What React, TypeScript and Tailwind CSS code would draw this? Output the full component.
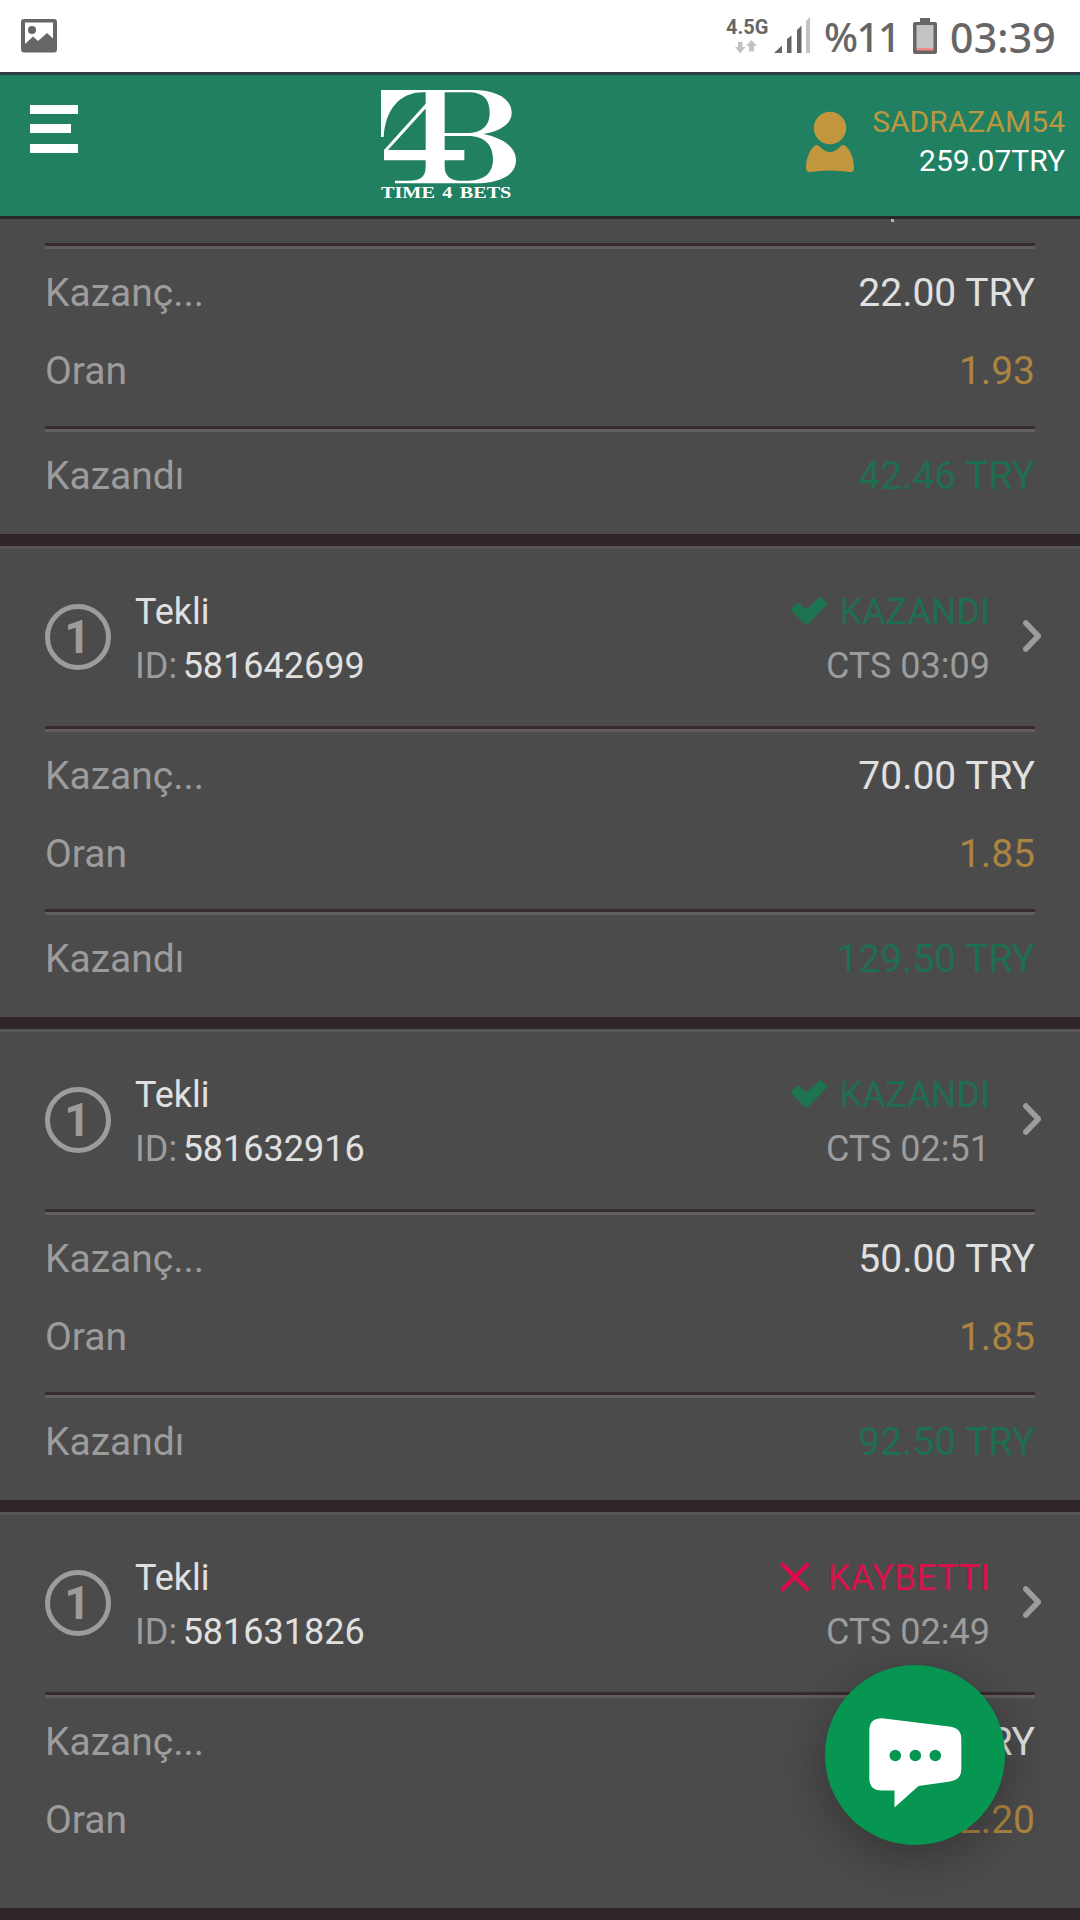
import { clsx } from "clsx";

type Bet = {
  id?: string;
  time?: string;
  status: "won" | "lost";
  stake: string;
  odds: string;
  payout?: string;
};

const bets: Bet[] = [
  { status: "won", stake: "22.00 TRY", odds: "1.93", payout: "42.46 TRY" },
  { id: "581642699", time: "03:09", status: "won", stake: "70.00 TRY", odds: "1.85", payout: "129.50 TRY" },
  { id: "581632916", time: "02:51", status: "won", stake: "50.00 TRY", odds: "1.85", payout: "92.50 TRY" },
  { id: "581631826", time: "02:49", status: "lost", stake: "50.00 TRY", odds: "2.20" },
];

function StatusBar() {
  return (
    <div className="flex h-[72px] shrink-0 items-start justify-between bg-white text-[#666]">
      <svg className="mt-[19px] ml-[21px] h-[34px] w-9" viewBox="0 0 36 34">
        <path
          fill="#666"
          fillRule="evenodd"
          d="M3 0H33Q36 0 36 3V30Q36 33.5 33 33.5H3Q0 33.5 0 30V3Q0 0 3 0ZM4 3.5V25L12 17.5L17 22L26 14L32 19.5V3.5Z"
        />
        <circle cx="11" cy="11" r="4" fill="#666" />
      </svg>
      <div className="flex h-[72px] items-start">
        <div className="w-[48px] pt-[16px]">
          <div className="h-[24px] text-[20px] leading-[23px] font-bold">
            4.5G
          </div>
          <svg className="ml-[9px] h-[14px] w-[22px]" viewBox="0 0 22 14">
            <path fill="#c3c3c3" d="M3 2H7.500V7H10.500L5.200 13.500L0 7H3ZM14 11.500H19V6H22L16.500 0L11 6H14Z" />
          </svg>
        </div>
        <svg className="mt-[17px] h-[36px] w-[36px]" viewBox="0 0 36 36">
          <path fill="#666" d="M0 36L8 28.500V36ZM13 22L17.500 18.500V36H13ZM23 13L27.500 8.500V36H23Z" />
          <path fill="#c3c3c3" d="M32 4L36 0V36H32Z" />
        </svg>
        <span className="mt-[9px] ml-[14px] w-[89px] font-['Noto_Sans',sans-serif] text-[40px] leading-[56px] font-medium tracking-[-1.500px] whitespace-nowrap">
          %11
        </span>
        <svg className="mt-[18px] h-[36px] w-[24px]" viewBox="0 0 24 36">
          <path fill="#666" d="M7 0H17V4H22Q24 4 24 6V34Q24 36 22 36H2Q0 36 0 34V6Q0 4 2 4H7Z" />
          <path fill="#c3c3c3" d="M3.500 7H20.500V30H3.500Z" />
          <path fill="#f08a8a" d="M3.500 30H20.500V32.500H3.500Z" />
        </svg>
        <span className="mt-[9px] ml-[13px] w-[130px] font-['Noto_Sans',sans-serif] text-[41px] leading-[56px] font-medium tracking-[0.2px] whitespace-nowrap">
          03:39
        </span>
      </div>
    </div>
  );
}

function Logo() {
  return (
    <svg className="h-[111px] w-[136px]" viewBox="63 90 408 333">
      <g fill="#fff">
        <path d="M63 90H200V97C118 92 76 150 71 231H63Z" />
        <path
          fillRule="evenodd"
          d="M197 90H340C412 90 455 118 455 158C455 190 426 212 370 222C430 234 468 262 468 300C468 345 422 370 345 370H105V362H145C182 362 197 350 197 320ZM254 97V219H320C368 219 389 195 389 158C389 120 372 97 325 97ZM254 228V320C254 345 270 362 300 362H325C375 362 399 338 399 298C399 256 375 228 325 228Z"
        />
        <path fillRule="evenodd" d="M72 270L199 129V143L84 270H313V301H72Z" />
        <text
          x="63"
          y="413"
          textLength="391"
          wordSpacing="6"
          lengthAdjust="spacingAndGlyphs"
          className="font-['Liberation_Serif',serif] text-[52px] font-bold"
        >
          TIME 4 BETS
        </text>
      </g>
    </svg>
  );
}

function Header() {
  return (
    <header className="flex h-[147px] shrink-0 items-start justify-between border-t-[3px] border-b-[3px] border-t-[#2f3d46] border-b-[#2a2627] bg-[#218061]">
      <button className="mt-[30px] ml-[30px] flex w-[351px] flex-col gap-[10.300px]">
        <span className="h-[9px] w-12 bg-white" />
        <span className="h-[9px] w-[40.500px] bg-white" />
        <span className="h-[9px] w-12 bg-white" />
      </button>
      <div className="mt-[15px]">
        <Logo />
      </div>
      <div className="flex grow items-start justify-end pr-[15px]">
        <svg className="mt-[36px] mr-[18px] h-[62px] w-[48px]" viewBox="0 0 48 62">
          <g fill="#c2963d">
            <circle cx="24" cy="17" r="16.200" />
            <path d="M10 34Q12 33.500 14 36Q24 46 34 36Q36 33.500 38 34C45 38 48 49 48 57Q48 61.500 44 61Q24 58 4 61Q0 61.500 0 57C0 49 3 38 10 34Z" />
          </g>
        </svg>
        <div className="pt-[27px] text-right text-[30px] leading-[39px]">
          <div className="text-[#b9983f]">SADRAZAM54</div>
          <div className="text-white">259.07TRY</div>
        </div>
      </div>
    </header>
  );
}

function Divider() {
  return <div className="mx-[45px] h-[6px] border-t-[3px] border-t-[#372b2c] bg-[#625e5f]" />;
}

function Row({ label, value, color }: { label: string; value: string; color: string }) {
  return (
    <div className="flex h-[78px] items-center justify-between px-[45px] text-[39px]">
      <span className="text-[#9c9c9c]">{label}</span>
      <span className={color}>{value}</span>
    </div>
  );
}

function BetHead({ id, time, status }: Bet) {
  const won = status === "won";
  return (
    <div className="flex h-[177px] items-start pl-[45px] text-[36px] leading-[54px]">
      <div className="mt-[55px] flex size-[66px] items-center justify-center rounded-full border-[5px] border-[#9c9c9c] pr-px text-[46px] font-bold text-[#9c9c9c]">
        1
      </div>
      <div className="mt-9 ml-6">
        <div className="text-[#e0e0e0]">Tekli</div>
        <div className="text-[#9c9c9c]">
          ID:<span className="ml-[5.500px] text-[#e0e0e0]">{id}</span>
        </div>
      </div>
      <div className="mt-9 ml-auto text-right">
        <div className={clsx("flex items-start justify-end", won ? "text-[#1f6e50]" : "text-[#d4144b]")}>
          {won ? (
            <svg className="mt-[12px] mr-[13px] h-[28px] w-9" viewBox="0 0 36 28">
              <path
                fill="#1c7550"
                d="M1 11L6 6.500Q7.500 5.500 9 7L15 12.500L28 .8Q29.500-.3 31 1L35.500 5.500Q36.500 7 35 8.500L17 27Q15.500 28.500 14 27L.8 14Q-.5 12.500 1 11Z"
              />
            </svg>
          ) : (
            <svg className="mt-[11px] mr-[18px] size-[30px]" viewBox="0 0 30 30">
              <path stroke="#e0094a" strokeWidth="4" d="M1.500 1.500L28.500 28.500M28.500 1.500L1.500 28.500" />
            </svg>
          )}
          {won ? "KAZANDI" : "KAYBETTI"}
        </div>
        <div className="text-[#9c9c9c]">CTS {time}</div>
      </div>
      <svg className="mt-[71px] mr-[39px] ml-[33px] h-[32px] w-[18px]" viewBox="0 0 18 32">
        <path
          d="M2.800 3L15.300 16L2.800 29"
          fill="none"
          stroke="#9c9c9c"
          strokeWidth="5.500"
          strokeLinecap="round"
          strokeLinejoin="round"
        />
      </svg>
    </div>
  );
}

function BetCard({ bet }: { bet: Bet }) {
  return (
    <div className="shrink-0 border-b-[12px] border-b-[#2f2528] bg-[#4b4b4b]">
      {bet.id ? (
        <div className="border-t-[3px] border-t-[#555]">
          <BetHead {...bet} />
        </div>
      ) : (
        // scrolled under the header, only the tail of its text shows
        <div className="h-[24px] pl-[891px]">
          <div className="size-[3px] bg-[#b4b4b4]" />
        </div>
      )}
      <Divider />
      <div className={clsx("pt-[5px]", bet.payout ? "pb-4" : "pb-[49px]")}>
        <Row label="Kazanç..." value={bet.stake} color="text-[#e0e0e0]" />
        <Row label="Oran" value={bet.odds} color="text-[#aa8440]" />
      </div>
      {bet.payout && (
        <>
          <Divider />
          <div className="pt-[5px] pb-[19px]">
            <Row label="Kazandı" value={bet.payout} color="text-[#1f6e50]" />
          </div>
        </>
      )}
    </div>
  );
}

function ChatButton() {
  return (
    <button className="absolute top-[1665px] left-[825px] flex size-[180px] items-start rounded-full bg-[#079552] shadow-[0_12px_48px_rgba(0,0,0,0.3)]">
      <svg className="mt-[53px] ml-[44px] h-[90px] w-[93px]" viewBox="0 0 93 90">
        <path
          fill="#fff"
          d="M13 .2L80 8.500Q92.300 9.500 92.300 21V51Q92.300 62 81 63.500L49.500 68L25.500 89.500V72.500H13Q.3 72.500 .3 60V12.500Q.3 .2 13 .2Z"
        />
        <g fill="#079552">
          <circle cx="26.300" cy="37.500" r="5.800" />
          <circle cx="46.300" cy="37.500" r="5.800" />
          <circle cx="66.300" cy="37.500" r="5.800" />
        </g>
      </svg>
    </button>
  );
}

export default function App() {
  return (
    <div className="relative flex h-[1920px] w-[1080px] flex-col overflow-hidden bg-[#4b4b4b] font-[Roboto,sans-serif]">
      <StatusBar />
      <Header />
      <main className="flex min-h-0 grow flex-col">
        {bets.map((bet, i) => (
          <BetCard key={i} bet={bet} />
        ))}
      </main>
      <ChatButton />
    </div>
  );
}
